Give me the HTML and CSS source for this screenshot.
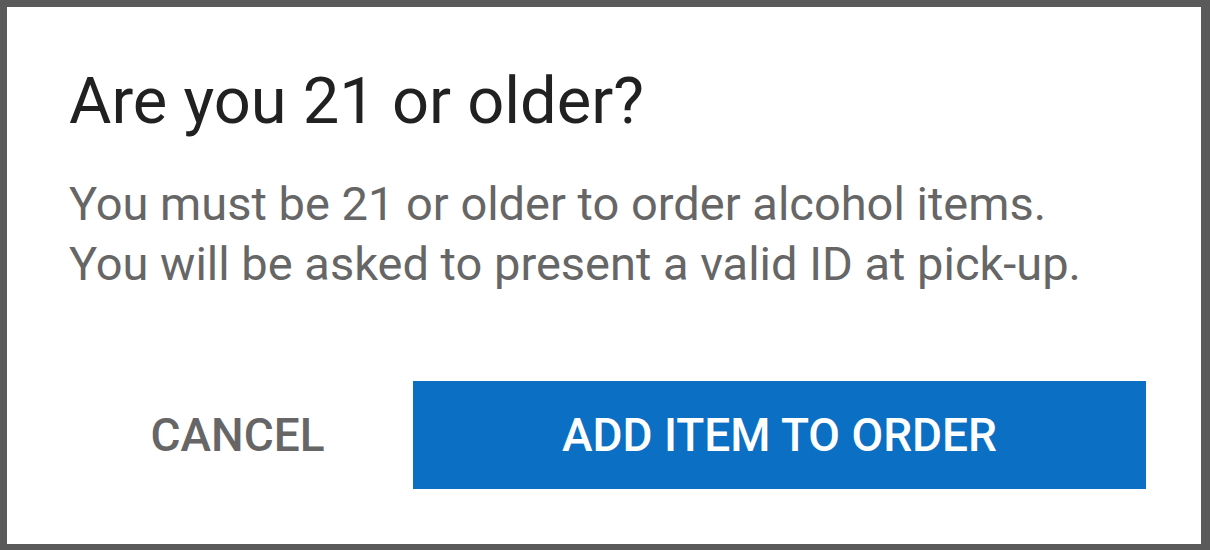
FILE: index.html
```html
<!DOCTYPE html>
<html lang="en">
<head>
    <meta charset="UTF-8">
    <meta name="viewport" content="width=device-width, initial-scale=1.0">
    <title>Age check</title>
    <link rel="stylesheet" href="styles.css">
</head>
<body>

<div class="dialog">
    <h1 class="dialog-title">Are you 21 or older?</h1>
    <p class="dialog-text">You must be 21 or older to order alcohol items.<br>You will be asked to present a valid ID at pick-up.</p>

    <div class="dialog-actions">
        <button class="btn btn-cancel">CANCEL</button>
        <button class="btn btn-confirm">ADD ITEM TO ORDER</button>
    </div>
</div>

</body>
</html>
```

FILE: styles.css
```css
html, body {
    height: 100%;
}
body {
    background-color: #5a5a5a;
    margin: 0;
    padding: 7px 9px 6px 7px;
    box-sizing: border-box;
    font-family: Roboto, "Liberation Sans", sans-serif;
}
.dialog {
    background-color: white;
    height: 100%;
    box-sizing: border-box;
    padding: 0 55px 0 62px;
    display: flex;
    flex-direction: column;
}
.dialog-title {
    margin: 56px 0 0 0;
    font-size: 65px;
    font-weight: 400;
    line-height: 76px;
    color: #212121;
}
.dialog-text {
    margin: 35px 0 0 0;
    font-size: 47px;
    line-height: 60px;
    color: #666666;
}
.dialog-actions {
    margin-top: auto;
    margin-bottom: 55px;
    display: flex;
}
.btn {
    border: none;
    font-family: Roboto, "Liberation Sans", sans-serif;
    font-size: 46px;
    font-weight: 500;
    height: 108px;
    padding: 0;
    cursor: pointer;
}
.btn-cancel {
    background: none;
    color: #666666;
    width: 337px;
    margin-right: 7px;
}
.btn-confirm {
    flex: 1;
    background-color: #0b6fc4;
    color: white;
}
```
